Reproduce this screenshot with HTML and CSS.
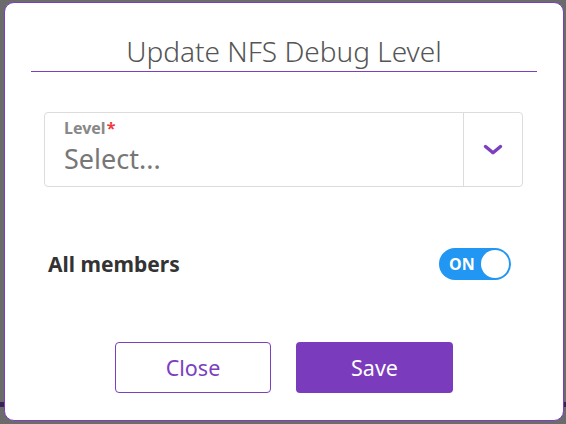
FILE: index.html
```html
<!DOCTYPE html>
<html lang="en">
<head>
<meta charset="utf-8">
<title>Update NFS Debug Level</title>
<link rel="stylesheet" href="styles.css">
</head>
<body>
<div class="dialog">
  <div class="dialog-header">
    <h1 class="dialog-title">Update NFS Debug Level</h1>
  </div>
  <div class="dialog-body">
    <div class="select">
      <div class="select-value">
        <div class="select-label">Level<span class="required">*</span></div>
        <div class="select-placeholder">Select...</div>
      </div>
      <div class="select-indicator">
        <svg width="20" height="12" viewBox="0 0 20 12"><path d="M2.5 2.5 L10 8.8 L17.5 2.5" fill="none" stroke="#7b3fc0" stroke-width="3.4" stroke-linecap="round" stroke-linejoin="round"/></svg>
      </div>
    </div>
    <div class="toggle-row">
      <span class="toggle-label">All members</span>
      <span class="toggle">
        <span class="toggle-text">ON</span>
        <span class="toggle-knob"></span>
      </span>
    </div>
  </div>
  <div class="dialog-footer">
    <button class="btn btn-outline">Close</button>
    <button class="btn btn-primary">Save</button>
  </div>
</div>
</body>
</html>
```

FILE: styles.css
```css
html, body {
  margin: 0;
  padding: 0;
}
body {
  width: 566px;
  height: 424px;
  overflow: hidden;
  background:
    linear-gradient(to bottom, transparent 402px, #3a2258 402px, #3a2258 407px, transparent 407px),
    #6b6b6b;
  font-family: "Noto Sans", "Open Sans", sans-serif;
  padding-top: 2px;
  box-sizing: border-box;
}
.dialog {
  margin-left: 4px;
  width: 560px;
  height: 419px;
  box-sizing: border-box;
  background: #fff;
  border: 1px solid #7b3fc0;
  border-radius: 10px;
  display: flex;
  flex-direction: column;
}
.dialog-header {
  margin: 32px 26px 0;
  padding-bottom: 4px;
  border-bottom: 1px solid #7b3fc0;
  text-align: center;
}
.dialog-title {
  margin: 0;
  font-size: 28px;
  line-height: 32px;
  font-weight: 300;
  color: #555;
}
.dialog-body {
  padding: 0 40px 0 39px;
}
.select {
  margin-top: 40px;
  height: 75px;
  box-sizing: border-box;
  border: 1px solid #dcdcdc;
  border-radius: 4px;
  display: flex;
}
.select-value {
  flex: 1;
  padding: 6px 0 0 19px;
}
.select-label {
  font-size: 16px;
  line-height: 18px;
  font-weight: 700;
  color: #888;
}
.required {
  color: #f03a3a;
  margin-left: 1px;
}
.select-placeholder {
  margin-top: 7px;
  font-size: 27px;
  line-height: 30px;
  color: #777;
}
.select-indicator {
  width: 58px;
  border-left: 1px solid #dcdcdc;
  display: flex;
  align-items: center;
  justify-content: center;
}
.toggle-row {
  margin-top: 61px;
  padding-left: 4px;
  padding-right: 12px;
  height: 32px;
  display: flex;
  align-items: center;
  justify-content: space-between;
}
.toggle-label {
  font-size: 21px;
  font-weight: 700;
  color: #333;
}
.toggle {
  width: 72px;
  height: 32px;
  box-sizing: border-box;
  border-radius: 16px;
  background: #2196f3;
  display: flex;
  align-items: center;
  justify-content: space-between;
  padding: 0 2px 0 10px;
}
.toggle-text {
  color: #fff;
  font-size: 16px;
  font-weight: 700;
}
.toggle-knob {
  width: 28px;
  height: 28px;
  border-radius: 50%;
  background: #fff;
}
.dialog-footer {
  margin-top: 62px;
  display: flex;
  justify-content: center;
  gap: 25px;
}
.btn {
  height: 51px;
  width: 157px;
  box-sizing: border-box;
  border-radius: 4px;
  font-family: inherit;
  font-size: 21.5px;
  cursor: pointer;
}
.btn-outline {
  width: 156px;
  background: #fff;
  color: #7b3fc0;
  border: 1px solid #7b3fc0;
}
.btn-primary {
  background: #7b3bbd;
  color: #fff;
  border: none;
}
```
